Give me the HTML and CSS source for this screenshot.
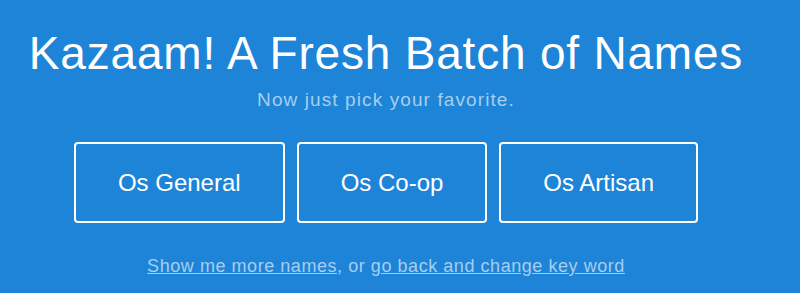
FILE: index.html
```html
<!DOCTYPE html>
<html>
<head>
<meta charset="utf-8">
<link rel="stylesheet" href="styles.css">
</head>
<body>
<main class="page">
  <h1 class="title">Kazaam! A Fresh Batch of Names</h1>
  <p class="subtitle">Now just pick your favorite.</p>
  <div class="choices">
    <button class="choice">Os General</button>
    <button class="choice">Os Co-op</button>
    <button class="choice">Os Artisan</button>
  </div>
  <p class="more"><a href="#" class="link">Show me more names</a>, or <a href="#" class="link">go back and change key word</a></p>
</main>
</body>
</html>
```
FILE: styles.css
```css
html, body {
  margin: 0;
  padding: 0;
  background: #1e84d8;
  height: 100%;
  overflow: hidden;
}
.page {
  width: 772px;
  display: flex;
  flex-direction: column;
  align-items: center;
  font-family: "Liberation Sans", Arial, sans-serif;
  color: #ffffff;
}
.title {
  margin: 27px 0 0;
  font-size: 46px;
  font-weight: normal;
  line-height: 52px;
  letter-spacing: 0.8px;
  white-space: nowrap;
}
.subtitle {
  margin: 10px 0 0;
  font-size: 19px;
  line-height: 22px;
  letter-spacing: 1.1px;
  color: #a5ceef;
}
.choices {
  display: flex;
  gap: 12px;
  margin-top: 31px;
}
.choice {
  font-family: "Liberation Sans", Arial, sans-serif;
  font-size: 24px;
  color: #ffffff;
  background: transparent;
  border: 2px solid #ffffff;
  border-radius: 4px;
  height: 81px;
  padding: 0 42px;
  cursor: pointer;
}
.more {
  margin: 32px 0 0;
  font-size: 18px;
  line-height: 22px;
  letter-spacing: 0.55px;
  color: #a5ceef;
}
.link {
  color: #a5ceef;
  text-decoration: underline;
}
```
